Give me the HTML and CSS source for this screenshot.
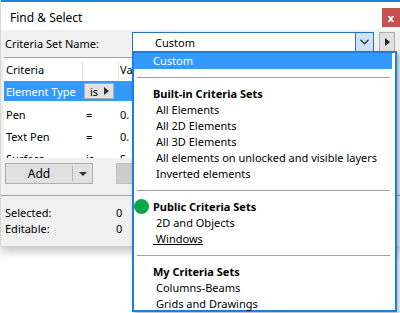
FILE: index.html
```html
<!DOCTYPE html>
<html lang="en">
<head>
    <meta charset="UTF-8">
    <title>Find &amp; Select</title>
    <link rel="stylesheet" href="styles.css">
</head>
<body>
    <div class="window">
        <div class="titlebar">
            <span class="title">Find &amp; Select</span>
            <span class="close">x</span>
        </div>
        <div class="content">
            <div class="set-row">
                <span class="set-label">Criteria Set Name:</span>
                <div class="combo">
                    <span class="combo-value">Custom</span>
                    <span class="combo-arrow">
                        <svg width="9" height="6" viewBox="0 0 9 6"><path d="M0.5 0.8 L4.5 4.8 L8.5 0.8" fill="none" stroke="#333" stroke-width="1.3"/></svg>
                    </span>
                </div>
                <div class="next-btn">
                    <svg width="5" height="8" viewBox="0 0 5 8"><path d="M0 0 L5 4 L0 8 Z" fill="#222"/></svg>
                </div>
            </div>

            <div class="grid">
                <div class="grid-row head">
                    <div class="c1">Criteria</div>
                    <div class="c2"></div>
                    <div class="c3">Value</div>
                </div>
                <div class="grid-row selected">
                    <div class="c1">Element Type</div>
                    <div class="c2"><span class="is-btn">is <svg width="5" height="8" viewBox="0 0 5 8"><path d="M0 0 L5 4 L0 8 Z" fill="#333"/></svg></span></div>
                    <div class="c3"></div>
                </div>
                <div class="grid-row">
                    <div class="c1">Pen</div>
                    <div class="c2">=</div>
                    <div class="c3">0.</div>
                </div>
                <div class="grid-row">
                    <div class="c1">Text Pen</div>
                    <div class="c2">=</div>
                    <div class="c3">0.</div>
                </div>
                <div class="grid-row cut">
                    <div class="c1">Surface</div>
                    <div class="c2">is</div>
                    <div class="c3">S</div>
                </div>
            </div>

            <div class="buttons">
                <div class="add-btn">
                    <span class="add-label">Add</span>
                    <span class="add-split">
                        <svg width="8" height="4" viewBox="0 0 8 4"><path d="M0 0 L8 0 L4 4 Z" fill="#333"/></svg>
                    </span>
                </div>
                <div class="gray-btn"></div>
            </div>

            <div class="stats">
                <div class="stat"><span>Selected:</span><span class="num">0</span></div>
                <div class="stat"><span>Editable:</span><span class="num">0</span></div>
            </div>
        </div>
    </div>

    <div class="dropdown">
        <div class="item current">Custom</div>
        <div class="sep"></div>
        <div class="group">Built-in Criteria Sets</div>
        <div class="item">All Elements</div>
        <div class="item">All 2D Elements</div>
        <div class="item">All 3D Elements</div>
        <div class="item">All elements on unlocked and visible layers</div>
        <div class="item">Inverted elements</div>
        <div class="sep"></div>
        <div class="group"><span class="dot"></span>Public Criteria Sets</div>
        <div class="item">2D and Objects</div>
        <div class="item link"><span>&nbsp;Windows</span></div>
        <div class="sep"></div>
        <div class="group">My Criteria Sets</div>
        <div class="item">Columns-Beams</div>
        <div class="item">Grids and Drawings</div>
    </div>
</body>
</html>
```

FILE: styles.css
```css
body{
    margin: 0;
    width: 400px;
    height: 313px;
    overflow: hidden;
    background: #ffffff;
    font-family: "Noto Sans", "Open Sans", sans-serif;
    font-size: 11px;
    color: #000;
    position: relative;
}

.window{
    width: 400px;
    height: 246px;
    background: #f0f0f0;
    box-shadow: 0 4px 10px rgba(0, 0, 0, 0.28);
    border-left: 1px solid #d6d6d6;
    box-sizing: border-box;
}

.titlebar{
    height: 30px;
    border-top: 2px solid #1883d7;
    background: #ffffff;
    box-sizing: border-box;
    display: flex;
    align-items: flex-start;
    justify-content: space-between;
}

.title{
    font-size: 12px;
    padding: 7px 0 0 9px;
}

.close{
    margin-top: 6px;
    width: 18px;
    height: 19px;
    background: #c75050;
    color: #fff;
    font-weight: bold;
    font-size: 11px;
    display: flex;
    align-items: center;
    justify-content: center;
}

.set-row{
    display: flex;
    align-items: center;
    height: 27px;
    padding-left: 4px;
}

.set-label{
    width: 127px;
}

.combo{
    width: 242px;
    height: 20px;
    margin-top: -3px;
    border: 1px solid #2a72b8;
    background: #fff;
    box-sizing: border-box;
    display: flex;
    align-items: center;
}

.combo-value{
    flex: 1;
    padding-left: 22px;
}

.combo-arrow{
    width: 17px;
    height: 18px;
    background: #cce4f7;
    border-left: 1px solid #2a72b8;
    display: flex;
    align-items: center;
    justify-content: center;
}

.next-btn{
    width: 16px;
    height: 20px;
    margin-left: 5px;
    margin-top: -3px;
    border: 1px solid #adadad;
    background: #e1e1e1;
    box-sizing: border-box;
    display: flex;
    align-items: center;
    justify-content: center;
}

.grid{
    margin-left: 3px;
    width: 220px;
    border-top: 1px solid #a0a0a0;
    background: #fff;
    height: 100px;
    overflow: hidden;
}

.grid-row{
    display: flex;
    height: 22px;
    align-items: center;
}

.grid-row.head{
    height: 23px;
    align-items: flex-end;
}

.grid-row.head > div{
    height: 19px;
    border-right: 1px solid #e5e5e5;
    box-sizing: border-box;
}

.grid-row.selected{
    background: #3399ff;
    color: #fff;
    height: 20px;
    margin-bottom: 2px;
}

.c1{
    width: 79px;
    padding-left: 2px;
    box-sizing: border-box;
}

.c2{
    width: 36px;
    padding-left: 3px;
    box-sizing: border-box;
}

.c3{
    flex: 1;
    padding-left: 1px;
}

.is-btn{
    display: inline-flex;
    align-items: center;
    gap: 6px;
    width: 30px;
    height: 16px;
    margin-left: -2px;
    padding-left: 5px;
    box-sizing: border-box;
    background: #e1e1e1;
    border: 1px solid #adadad;
    color: #000;
}

.buttons{
    display: flex;
    gap: 23px;
    padding: 5px 0 0 4px;
}

.add-btn{
    width: 88px;
    height: 21px;
    border: 1px solid #adadad;
    background: #e1e1e1;
    box-sizing: border-box;
    display: flex;
    align-items: center;
    font-size: 12px;
}

.add-label{
    width: 66px;
    text-align: center;
    border-right: 1px solid #b5b5b5;
    line-height: 15px;
}

.add-split{
    flex: 1;
    display: flex;
    justify-content: center;
}

.gray-btn{
    width: 88px;
    height: 21px;
    background: #cccccc;
    border: 1px solid #bfbfbf;
    box-sizing: border-box;
}

.stats{
    margin-top: 11px;
    border-top: 1px solid #a0a0a0;
    padding: 8px 0 0 4px;
}

.stat{
    display: flex;
    height: 16px;
    align-items: center;
}

.stat span:first-child{
    width: 111px;
}

.dropdown{
    position: absolute;
    left: 132px;
    top: 51px;
    width: 265px;
    height: 261px;
    border: 2px solid #1a7fe0;
    box-sizing: border-box;
    background: #fff;
    box-shadow: 2px 2px 4px rgba(0, 0, 0, 0.3);
    font-size: 11px;
}

.item,
.group{
    height: 16px;
    line-height: 16px;
    padding-left: 22px;
    position: relative;
    white-space: nowrap;
}

.group{
    padding-left: 19px;
    font-weight: bold;
}

.item.current{
    padding-left: 19px;
    margin-right: 3px;
    background: #3399ff;
    color: #fff;
}

.item.link{
    padding-left: 19px;
}

.item.link span{
    text-decoration: underline;
}

.sep{
    height: 17px;
    margin: 0 5px 0 3px;
    display: flex;
    align-items: center;
}

.sep::after{
    content: "";
    flex: 1;
    border-top: 1px solid #a0a0a0;
}

.dot{
    position: absolute;
    left: 0;
    top: 0;
    width: 15px;
    height: 15px;
    border-radius: 50%;
    background: #0aa64a;
}
```
